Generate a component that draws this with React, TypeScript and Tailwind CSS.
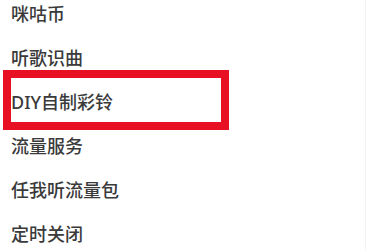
const items = ['咪咕币', '听歌识曲', 'DIY自制彩铃', '流量服务', '任我听流量包', '定时关闭']

export default function App() {
  return (
    <div
      className="w-[372px] h-[250px] overflow-hidden bg-white flex"
      style={{ fontFamily: '"Noto Sans", "Noto Sans CJK SC", sans-serif' }}
    >
      <div className="w-[366px] border-r border-[#f3f3f3]">
        <ul className="-mt-[8px]">
          {items.map((label) => (
            <li key={label} className="relative h-[44px] flex items-center pl-[11px] text-[18px] font-medium text-[#3a3a3a]">
              {label === 'DIY自制彩铃' && (
                <div className="absolute left-[3px] top-[-10px] w-[226px] h-[60px] border-[8px] border-[#e81123]" />
              )}
              <span className="relative">{label}</span>
            </li>
          ))}
        </ul>
      </div>
    </div>
  )
}
